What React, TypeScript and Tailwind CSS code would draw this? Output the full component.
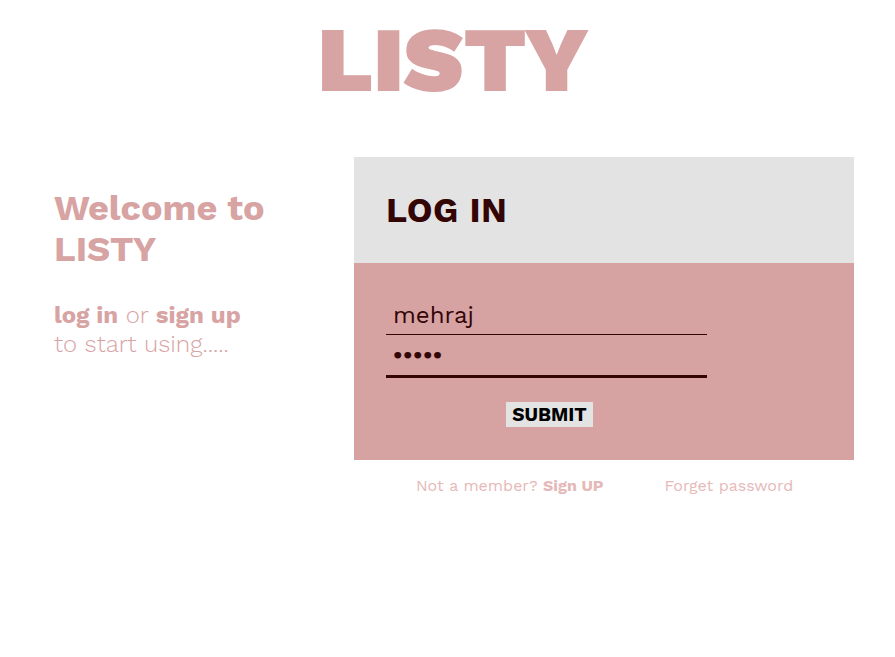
import React from "react";

export default function App() {
  const font = { fontFamily: '"Work Sans", Inter, "Open Sans", sans-serif' };
  return (
    <div className="w-[895px] h-[657px] bg-white relative" style={font}>
      <h1 className="text-center text-[92px] leading-none font-black text-[#d7a3a3] pt-[13px] pl-[12px]">
        LISTY
      </h1>
      <div className="flex mt-[52px]">
        <div className="w-[354px] pl-[54px] pt-[31px]">
          <h2 className="text-[36px] leading-[41px] font-bold text-[#d7a3a3]">
            Welcome to
            <br />
            LISTY
          </h2>
          <p className="mt-[31px] text-[24px] leading-[29px] text-[#d7a3a3] font-light">
            <span className="font-bold">log in</span> or{" "}
            <span className="font-bold">sign up</span>
            <br />
            to start using.....
          </p>
        </div>
        <div className="w-[500px]">
          <div className="bg-[#e3e3e3] h-[106px] flex items-center pl-[32px]">
            <span className="text-[35px] font-bold text-[#330505] tracking-[0.5px]">
              LOG IN
            </span>
          </div>
          <div className="bg-[#d6a2a2] h-[197px] pl-[32px] pt-[35px]">
            <div className="w-[321px] h-[37px] border-b border-[#330505] flex items-end pl-[7px] pb-[7px] text-[24px] text-[#330505] leading-none">
              mehraj
            </div>
            <div className="w-[321px] h-[43px] border-b-[3px] border-[#330505] flex items-center pl-[7px] text-[22px] font-bold text-[#330505] tracking-[0.5px]">
              •••••
            </div>
            <div className="mt-[24px] pl-[120px]">
              <span className="inline-block bg-[#e3e3e3] h-[25px] w-[87px] text-center text-[19px] leading-[25px] font-bold text-black">
                SUBMIT
              </span>
            </div>
          </div>
          <div className="flex text-[16px] text-[#e6b9b9] pt-[14px] pl-[62px]">
            <span>
              Not a member? <span className="font-bold">Sign UP</span>
            </span>
            <span className="ml-[61px]">Forget password</span>
          </div>
        </div>
      </div>
    </div>
  );
}
